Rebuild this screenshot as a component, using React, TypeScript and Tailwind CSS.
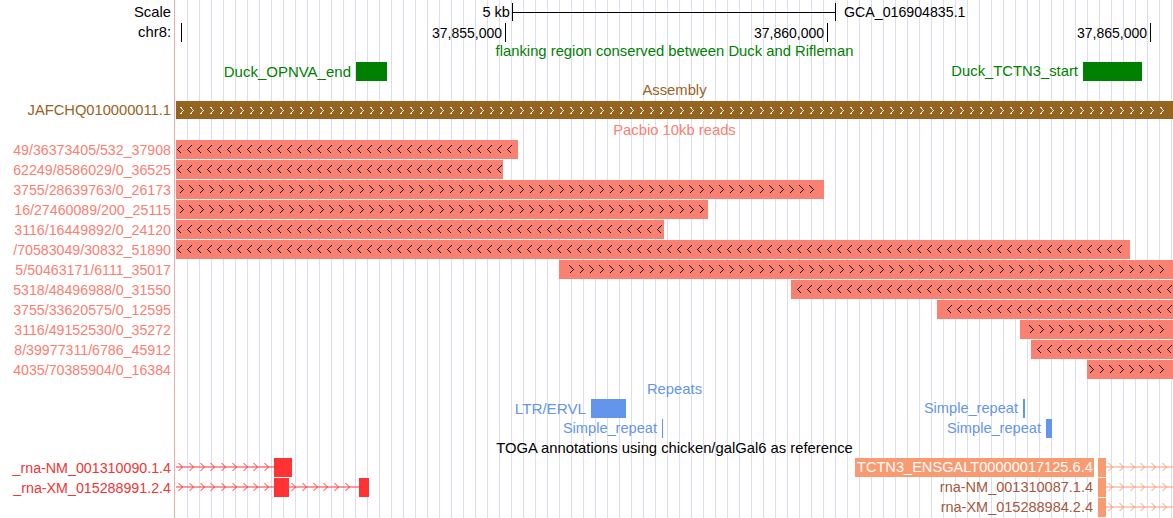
import React from "react";

type Dir = "<" | ">";
const O = 176; // global x of the data area origin
const W = 997; // data area width

function Marks({
  w,
  h,
  xs,
  dir,
  color,
  cw,
  ch,
  cy,
  crisp = true,
  line = false,
}: {
  w: number;
  h: number;
  xs: number[];
  dir: Dir;
  color: string;
  cw: number;
  ch: number;
  cy?: number;
  crisp?: boolean;
  line?: boolean;
}) {
  const c = cy ?? h / 2;
  return (
    <svg width={w} height={h} className="block overflow-hidden" shapeRendering={crisp ? "crispEdges" : "auto"}>
      {line && <line x1={0} x2={w} y1={c} y2={c} stroke={color} strokeWidth={1} />}
      {xs.map((x, i) => {
        const a = dir === ">" ? x : x + cw;
        const b = dir === ">" ? x + cw : x;
        return (
          <polyline
            key={i}
            points={`${a + 0.5},${c - ch / 2} ${b + 0.5},${c} ${a + 0.5},${c + ch / 2}`}
            fill="none"
            stroke={color}
            strokeWidth={1}
          />
        );
      })}
    </svg>
  );
}

function Row({
  h,
  label,
  labelClass = "text-black text-[14.8px]",
  children,
  center,
  centerClass = "",
}: {
  h: string;
  label?: string;
  labelClass?: string;
  children?: React.ReactNode;
  center?: string;
  centerClass?: string;
}) {
  return (
    <div className={`flex ${h}`}>
      <div
        className={`flex w-[175px] shrink-0 items-center justify-end overflow-hidden whitespace-nowrap border-r border-[#f7a9a9] bg-white pr-[3px] ${labelClass}`}
      >
        {label && <span className="shrink-0">{label}</span>}
      </div>
      <div className="relative ml-px w-[997px] shrink-0 overflow-hidden bg-[repeating-linear-gradient(90deg,transparent_0px,transparent_11px,#dcdcf4_11px,#dcdcf4_12px)]">
        {center && (
          <div className={`flex h-full items-center justify-center whitespace-nowrap text-[14.8px] ${centerClass}`}>
            {center}
          </div>
        )}
        {children}
      </div>
    </div>
  );
}

const reads: { label: string; s: number; e: number; d: Dir }[] = [
  { label: "49/36373405/532_37908", s: 176, e: 518, d: "<" },
  { label: "62249/8586029/0_36525", s: 176, e: 503, d: "<" },
  { label: "3755/28639763/0_26173", s: 176, e: 824, d: ">" },
  { label: "16/27460089/200_25115", s: 176, e: 708, d: ">" },
  { label: "3116/16449892/0_24120", s: 176, e: 664, d: "<" },
  { label: "/70583049/30832_51890", s: 176, e: 1130, d: "<" },
  { label: "5/50463171/6111_35017", s: 559, e: 1173, d: ">" },
  { label: "5318/48496988/0_31550", s: 791, e: 1173, d: "<" },
  { label: "3755/33620575/0_12595", s: 937, e: 1173, d: "<" },
  { label: "3116/49152530/0_35272", s: 1020, e: 1173, d: ">" },
  { label: "8/39977311/6786_45912", s: 1031, e: 1173, d: "<" },
  { label: "4035/70385904/0_16384", s: 1087, e: 1173, d: ">" },
];

function chevPositions(s: number, e: number, phase: number, period: number, cw: number, endPad = 2) {
  const out: number[] = [];
  for (let x = phase; x + cw <= e - endPad; x += period) {
    if (x >= s + 1) out.push(x - s);
  }
  return out;
}

function Track({ children }: { children: React.ReactNode }) {
  return <div className="absolute inset-0">{children}</div>;
}

function Read({ s, e, d }: { s: number; e: number; d: Dir }) {
  const ds = s - O;
  const de = e - O;
  const xs = chevPositions(ds, de, d === "<" ? 1 : 3, 10, 4);
  return (
    <div className="absolute top-0 h-[19px] bg-[#fa8072]" style={{ left: ds, width: de - ds }}>
      <Marks w={de - ds} h={19} xs={xs} dir={d} color="#000000" cw={4} ch={8} cy={9.5} />
    </div>
  );
}

function ArrowLine({ w, color }: { w: number; color: string }) {
  const xs: number[] = [];
  for (let x = 2; x + 5 <= w; x += 10.75) xs.push(Math.round(x));
  return (
    <div className="h-[19px] shrink-0">
      <Marks w={w} h={19} xs={xs} dir=">" color={color} cw={4} ch={8} cy={9} crisp={false} line />
    </div>
  );
}

/* label + feature block, anchored at the block's right end */
function Labeled({
  end,
  text,
  textCls,
  gap = "gap-[5px]",
  top = "top-0",
  children,
}: {
  end: number;
  text: string;
  textCls: string;
  gap?: string;
  top?: string;
  children: React.ReactNode;
}) {
  return (
    <div className={`absolute ${top} flex h-[19px] items-center whitespace-nowrap ${gap}`} style={{ right: W - (end - O) }}>
      <span className={textCls}>{text}</span>
      <div className="flex h-full items-stretch">{children}</div>
    </div>
  );
}

function RulerTick({ at, text }: { at: number; text?: string }) {
  return (
    <div className="absolute top-px h-[19px] w-px bg-black" style={{ left: at }}>
      {text && (
        <span className="absolute right-[4px] top-0 flex h-full items-center whitespace-nowrap text-[14px] text-black">
          {text}
        </span>
      )}
    </div>
  );
}

function TogaRight({ text }: { text: string }) {
  return (
    <div className="absolute left-[713px] top-0 flex h-[19px] items-center">
      <span className="w-[209px] shrink-0 whitespace-nowrap pr-[5px] text-right text-[14.5px] text-[#a5583a]">{text}</span>
      <div className="h-full w-[8px] shrink-0 bg-[#fa9a70]" />
      <ArrowLine w={67} color="#fa9a70" />
    </div>
  );
}

export default function App() {
  const asmXs = chevPositions(0, W, 4, 10, 4, 0);
  return (
    <div className="h-[518px] w-[1173px] overflow-hidden bg-white font-['Liberation_Sans',Arial,sans-serif] leading-none">
      {/* Scale */}
      <Row h="h-[22px]" label="Scale" labelClass="text-black text-[14.8px] pt-[2px]">
        <div className="absolute left-[336px] top-[3px] flex h-[18px] w-[324px] items-center border-x border-black">
          <div className="h-px w-full bg-black" />
          <span className="absolute right-full mr-[3px] whitespace-nowrap pt-[1px] text-[14.6px] text-black">5 kb</span>
          <span className="absolute left-full ml-[9px] whitespace-nowrap pt-[1px] text-[14.2px] text-black">
            GCA_016904835.1
          </span>
        </div>
      </Row>
      {/* chr8 ruler */}
      <Row h="h-[20px]" label="chr8:" labelClass="text-black text-[14.8px] pt-[1px]">
        <RulerTick at={5} />
        <RulerTick at={329} text="37,855,000" />
        <RulerTick at={651} text="37,860,000" />
        <RulerTick at={974} text="37,865,000" />
      </Row>
      {/* flanking */}
      <Row h="h-[19px]" center="flanking region conserved between Duck and Rifleman" centerClass="text-[#008000]" />
      <Row h="h-[20px]">
        <Track>
          <Labeled end={387} text="Duck_OPNVA_end" textCls="text-[15px] text-[#008000]" top="top-px">
            <div className="w-[31px] bg-[#008000]" />
          </Labeled>
          <Labeled end={1142} text="Duck_TCTN3_start" textCls="text-[14.8px] text-[#008000]" top="top-px">
            <div className="w-[59px] bg-[#008000]" />
          </Labeled>
        </Track>
      </Row>
      {/* Assembly */}
      <Row h="h-[19px]" center="Assembly" centerClass="text-[#96641e]" />
      <Row h="h-[20px]" label="JAFCHQ010000011.1" labelClass="text-[#96641e] text-[14.7px]">
        <div className="mt-px h-[18px] w-[997px] bg-[#96641e]">
          <Marks w={W} h={18} xs={asmXs} dir=">" color="#ffffff" cw={3} ch={7} cy={9.5} />
        </div>
      </Row>
      {/* Pacbio */}
      <Row h="h-[20px]" center="Pacbio 10kb reads" centerClass="text-[#fa8072]" />
      {reads.map((r) => (
        <Row key={r.label} h="h-[20px]" label={r.label} labelClass="text-[#fa8072] text-[14.2px]">
          <Read s={r.s} e={r.e} d={r.d} />
        </Row>
      ))}
      {/* Repeats */}
      <Row h="h-[19px]" center="Repeats" centerClass="text-[#6495ed]" />
      <Row h="h-[20px]">
        <Track>
          <Labeled end={626} text="LTR/ERVL" textCls="text-[15.2px] text-[#6495ed]">
            <div className="w-[35px] bg-[#6495ed]" />
          </Labeled>
          <Labeled end={1025} text="Simple_repeat" textCls="text-[14.6px] text-[#6495ed]">
            <div className="w-[2px] bg-[#6495ed]" />
          </Labeled>
        </Track>
      </Row>
      <Row h="h-[20px]">
        <Track>
          <Labeled end={663} text="Simple_repeat" textCls="text-[14.6px] text-[#6495ed]">
            <div className="w-px bg-[#6495ed]" />
          </Labeled>
          <Labeled end={1052} text="Simple_repeat" textCls="text-[14.6px] text-[#6495ed]">
            <div className="w-[6px] bg-[#6495ed]" />
          </Labeled>
        </Track>
      </Row>
      {/* TOGA */}
      <Row h="h-[19px]" center="TOGA annotations using chicken/galGal6 as reference" centerClass="text-black" />
      <Row h="h-[20px]" label="_rna-NM_001310090.1.4" labelClass="text-[#f03535] text-[14.25px]">
        <Track>
          <div className="flex h-[19px]">
            <ArrowLine w={98} color="#ff3333" />
            <div className="w-[18px] bg-[#ff3333]" />
          </div>
          <div className="absolute left-[679px] top-0 flex h-[19px]">
            <div className="flex w-[239px] shrink-0 items-center whitespace-nowrap bg-[#fa9a70] pl-[2px] text-[14.6px] text-white">
              TCTN3_ENSGALT00000017125.6.4
            </div>
            <div className="ml-[4px] w-[8px] shrink-0 bg-[#fa9a70]" />
            <ArrowLine w={67} color="#fa9a70" />
          </div>
        </Track>
      </Row>
      <Row h="h-[20px]" label="_rna-XM_015288991.2.4" labelClass="text-[#f03535] text-[14.25px]">
        <Track>
          <div className="flex h-[19px]">
            <ArrowLine w={98} color="#ff3333" />
            <div className="w-[15px] bg-[#ff3333]" />
            <ArrowLine w={70} color="#ff3333" />
            <div className="w-[10px] bg-[#ff3333]" />
          </div>
          <TogaRight text="rna-NM_001310087.1.4" />
        </Track>
      </Row>
      <Row h="h-[20px]">
        <Track>
          <TogaRight text="rna-XM_015288984.2.4" />
        </Track>
      </Row>
    </div>
  );
}
